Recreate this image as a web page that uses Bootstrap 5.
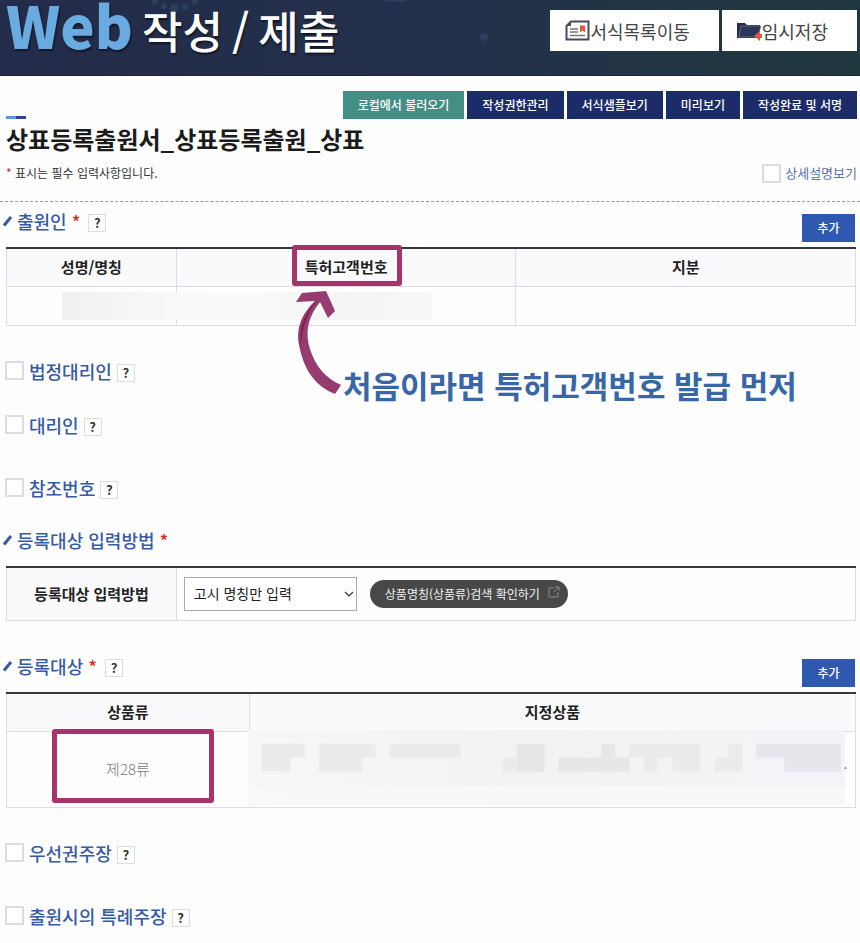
<!DOCTYPE html>
<html lang="ko">
<head>
<meta charset="utf-8">
<meta name="viewport" content="width=device-width, initial-scale=1">
<title>Web 작성 / 제출</title>
<link href="https://cdn.jsdelivr.net/npm/bootstrap@5.3.0/dist/css/bootstrap.min.css" rel="stylesheet">
<style>
body{font-family:"Noto Sans CJK KR",sans-serif;font-size:15px;color:#222;background:#fefefe}
.site-head{min-height:76px;padding:0 3px 0 6px;background:linear-gradient(90deg,#232c4a 0%,#23304b 50%,#20383f 100%);border-bottom:1px solid #1b2438;position:relative}
.site-title{font-size:44px;line-height:48px;font-weight:500;color:#fff;text-shadow:1px 2px 2px #0008;white-space:nowrap;gap:9px}
.site-title b{font-size:58px;font-weight:900;color:#69aae0}
.head-btns{gap:3px;padding-top:10px}
.deco{position:absolute;left:0;top:0}
.head-btn{background:#fff;color:#444;font-size:18px;line-height:40px;height:41px;border:0;border-radius:0;padding:0 29px 0 15px;white-space:nowrap}
.tools{gap:3px}
.tool-btn{background:#1b2c68;color:#fff;font-size:12px;line-height:28px;font-weight:500;border:0;border-radius:0;padding:0 15px;white-space:nowrap}
.tool-btn.teal{background:#438e85}
.bar-row{padding:15px 3px 0 6px}
.tick-mark{width:20px;height:3px;background:linear-gradient(90deg,#5b97d8 50%,#2f4495 50%)}
.form-title{font-size:24px;line-height:40px;font-weight:700;color:#1b1b1b;padding-left:6px}
.note-row{font-size:12px;line-height:28px;padding:0 3px 14px 6px;border-bottom:1px dashed #999;color:#333}
.req{color:#d8281f}
.box{appearance:none;width:19px;height:19px;border:2px solid #dcdce2;background:#fff;margin:0}
.detail{font-size:13px;color:#5a6fb0}
.sec-head{min-height:45px;padding:0 5px 5px 3px}
.sec-head.short{min-height:40px}
.sec-title{font-size:18px;line-height:28px;font-weight:500;color:#3659a8;margin:0;white-space:nowrap}
.lift{margin-bottom:7px}
.help{width:18px;height:18px;border:1px solid #ddd;background:#fff;color:#333;font-size:13px;line-height:16px;font-weight:700;padding:0;border-radius:0;margin-top:4px}
.add{background:#2f59b0;color:#fff;font-size:12px;line-height:28px;font-weight:500;border:0;padding:0 15px;width:53px}
.grid-wrap{padding:0 4px 0 6px}
.grid-t{width:100%;table-layout:fixed;border-collapse:collapse}
.grid-t th,.grid-t td{border:1px solid #dcdce6;text-align:center;vertical-align:middle;padding:0}
.grid-t>:first-child>tr:first-child>*{border-top:2px solid #36363e}
.grid-t th{background:#fafafc;font-weight:700;height:38px}
.grid-t .c20{width:20%}.grid-t .c28{width:28.6%}
.grid-t .h39{height:39px}.grid-t .h54 th{height:54px}.grid-t .h76{height:76px}
.hl{position:relative}
.hl::after{content:"";position:absolute;border:5px solid #a8336b;border-radius:3px}
.hl-a::after{inset:-11px -14px -9px -13px}
.hl-b::after{inset:-29px -64px -24px -54px}
.cls{color:#777;font-weight:300}
.over{position:absolute}
.smudge{left:55px;top:5px;width:370px;height:28px;background:linear-gradient(90deg,#f0f0f2,#f9f9fa 30%,#fafafa 50%,#f4f4f4 80%,#f8f8f8)}
.callout{left:calc(40% - 52px);top:41px}
.callout-text{font-size:31px;line-height:40px;font-weight:700;color:#3867a8;white-space:nowrap;margin:77px 0 0 -9px}
.opt{padding-left:5px;gap:5px}
.g31{margin-top:31px}.g26{margin-top:26px}.g35{margin-top:35px}
.method-row{padding-left:7px;gap:13px}
.method{width:173px;height:34px;border:1px solid #aaa;border-radius:0;font-size:14px;padding:0 28px 0 9px;color:#222;appearance:none;background:#fff}
.chev{right:3px;top:12px;pointer-events:none}
.pill{background:#484848;color:#f2f2f2;border-radius:14px;font-size:12px;line-height:28px;padding:0 8px 0 15px;text-decoration:none;white-space:nowrap}
.mosaic{left:-2px;top:-2px;width:calc(100% - 8px);height:75px}
.dot-end{right:8px;top:23px;font-size:12px;color:#666}
</style>
<script src="https://cdn.jsdelivr.net/npm/bootstrap@5.3.0/dist/js/bootstrap.bundle.min.js"></script>
</head>
<body>
<header class="site-head d-flex justify-content-between align-items-start">
  <svg class="deco" width="500" height="50" aria-hidden="true"><g fill="#33496a" opacity=".6"><circle cx="155" cy="2" r="3"/><circle cx="164" cy="6" r="3"/><circle cx="174" cy="8" r="4"/><circle cx="185" cy="7" r="3"/><circle cx="195" cy="2" r="3"/><circle cx="484" cy="37" r="4"/><ellipse cx="395" cy="-1" rx="14" ry="3"/></g></svg>
  <h1 class="site-title mb-0 position-relative d-flex align-items-baseline"><b>Web</b><span>작성</span><span>/</span><span>제출</span></h1>
  <div class="head-btns d-flex position-relative">
    <button type="button" class="head-btn d-flex align-items-center"><svg width="25" height="21" viewBox="0 0 25 21" aria-hidden="true"><path d="M6 1.500H23.500V19.500H1.500V6Z" fill="#fff" stroke="#444b5c" stroke-width="2"/><path d="M1 6H6V1Z" fill="#444b5c"/><path d="M5 9h8M5 12h8M5 15.500h15" stroke="#777" stroke-width="1.300"/><path d="M15 5.500h5v7l-2.500-2-2.500 2z" fill="#e1583d"/></svg>서식목록이동</button>
    <button type="button" class="head-btn d-flex align-items-center"><svg width="25" height="20" viewBox="0 0 25 20" aria-hidden="true"><path d="M0 2h8l2 2h13v13H0z" fill="#252b4c"/><path d="M2 15L4 5h20l-3 11H1z" fill="#2d3558" stroke="#8088a2" stroke-width=".6"/><path d="M17 15l6-5v3h3v4h-3v3z" fill="#e1583d"/></svg>임시저장</button>
  </div>
</header>
<main>
  <div class="bar-row d-flex justify-content-between align-items-end">
    <div class="tick-mark"></div>
    <div class="tools d-flex">
      <button type="button" class="tool-btn teal">로컬에서 불러오기</button>
      <button type="button" class="tool-btn">작성권한관리</button>
      <button type="button" class="tool-btn">서식샘플보기</button>
      <button type="button" class="tool-btn">미리보기</button>
      <button type="button" class="tool-btn">작성완료 및 서명</button>
    </div>
  </div>
  <h2 class="form-title mb-0">상표등록출원서_상표등록출원_상표</h2>
  <div class="note-row d-flex justify-content-between align-items-center">
    <span><span class="req">*</span> 표시는 필수 입력사항입니다.</span>
    <span class="d-flex align-items-center gap-1"><input class="box" type="checkbox" id="detail"><label class="detail" for="detail">상세설명보기</label></span>
  </div>

  <section>
    <div class="sec-head d-flex justify-content-between align-items-end">
      <div class="d-flex align-items-center lift">
        <svg class="me-1" width="10" height="12" aria-hidden="true"><path d="M1 10.500L8 2" stroke="#3659a8" stroke-width="3"/></svg>
        <h3 class="sec-title">출원인 <span class="req">*</span></h3><button type="button" class="help ms-2">?</button>
      </div>
      <button type="button" class="add">추가</button>
    </div>
    <div class="grid-wrap">
      <div class="position-relative">
        <table class="grid-t">
          <thead><tr><th class="c20">성명/명칭</th><th><span class="hl hl-a">특허고객번호</span></th><th>지분</th></tr></thead>
          <tbody><tr><td class="h39 position-relative"><div class="over smudge"></div></td><td></td><td></td></tr></tbody>
        </table>
        <div class="over callout d-flex align-items-start">
          <svg class="flex-shrink-0" width="58" height="108" viewBox="0 0 58 108" aria-hidden="true"><path d="M8 5L32 3L41 23L34 30L26 14Q8 36 16 61Q24 87 47 97L41 106Q12 95 5 57C1 36 12 22 21 13L2 14Z" fill="#963c70"/><path d="M26 9Q3 30 7 60Q7 30 26 9" fill="#7d1c53"/></svg>
          <div class="callout-text">처음이라면 특허고객번호 발급 먼저</div>
        </div>
      </div>
    </div>
  </section>

  <div class="opt g31 d-flex align-items-center"><input class="box" type="checkbox" id="o1"><label class="sec-title" for="o1">법정대리인</label><button type="button" class="help">?</button></div>
  <div class="opt g26 d-flex align-items-center"><input class="box" type="checkbox" id="o2"><label class="sec-title" for="o2">대리인</label><button type="button" class="help">?</button></div>
  <div class="opt g35 d-flex align-items-center"><input class="box" type="checkbox" id="o3"><label class="sec-title" for="o3">참조번호</label><button type="button" class="help">?</button></div>

  <section class="pt-4">
    <div class="sec-head short d-flex align-items-end">
      <div class="d-flex align-items-center lift">
        <svg class="me-1" width="10" height="12" aria-hidden="true"><path d="M1 10.500L8 2" stroke="#3659a8" stroke-width="3"/></svg>
        <h3 class="sec-title">등록대상 입력방법 <span class="req">*</span></h3>
      </div>
    </div>
    <div class="grid-wrap">
      <table class="grid-t"><tbody><tr class="h54"><th class="c20"><label for="method">등록대상 입력방법</label></th><td>
        <div class="method-row d-flex align-items-center">
          <div class="position-relative"><select class="method" id="method"><option>고시 명칭만 입력</option></select><svg class="over chev" width="10" height="10" aria-hidden="true"><path d="M1 3l4 4 4-4" fill="none" stroke="#333" stroke-width="1.200"/></svg></div>
          <a href="#" class="pill d-inline-flex align-items-center">상품명칭(상품류)검색 확인하기<svg class="ms-2 mb-1" width="12" height="12" aria-hidden="true"><path d="M6 2H1v9h9V6M7 1h4v4M11 1L6 6" fill="none" stroke="#8a8a8a"/></svg></a>
        </div></td></tr></tbody></table>
    </div>
  </section>

  <section class="g26">
    <div class="sec-head d-flex justify-content-between align-items-end">
      <div class="d-flex align-items-center lift">
        <svg class="me-1" width="10" height="12" aria-hidden="true"><path d="M1 10.500L8 2" stroke="#3659a8" stroke-width="3"/></svg>
        <h3 class="sec-title">등록대상 <span class="req">*</span></h3><button type="button" class="help ms-2">?</button>
      </div>
      <button type="button" class="add">추가</button>
    </div>
    <div class="grid-wrap">
      <table class="grid-t">
        <thead><tr><th class="c28">상품류</th><th>지정상품</th></tr></thead>
        <tbody><tr><td class="h76 cls"><span class="hl hl-b">제28류</span></td><td class="position-relative">
          <svg class="over mosaic" viewBox="0 0 598 76" preserveAspectRatio="none" aria-hidden="true"><defs><linearGradient id="mg"><stop offset="0" stop-color="#f7f7f7"/><stop offset=".45" stop-color="#f2f2f2"/><stop offset="1" stop-color="#f3f4f8"/></linearGradient></defs><rect width="598" height="76" fill="url(#mg)"/><rect y="57" width="598" height="19" fill="#f9f9fa" opacity=".7"/>
          <g fill="#ebebec"><path d="M14 14h43v14H43v14H14zM71 14h57v14h-14v14H71zM142 14h71v14h-71z"/><path d="M269 14h28v28h-28z" fill="#e6e6e6"/><path d="M255 28h14v14h-14z"/><path d="M354 14h14v14h14v14h-71V28h43z" fill="#e7e7e8"/><path d="M382 14h71v28h-28V28h-15v14h-14V28h-14z"/><path d="M481 14h14v28h-28V28h14z"/><path d="M509 14h85v28h-57V28h-28z" fill="#e6e7ed"/></g></svg>
          <span class="over dot-end">.</span></td></tr></tbody>
      </table>
    </div>
  </section>

  <div class="opt g31 d-flex align-items-center"><input class="box" type="checkbox" id="o4"><label class="sec-title" for="o4">우선권주장</label><button type="button" class="help">?</button></div>
  <div class="opt g35 d-flex align-items-center"><input class="box" type="checkbox" id="o5"><label class="sec-title" for="o5">출원시의 특례주장</label><button type="button" class="help">?</button></div>
</main>
</body>
</html>
